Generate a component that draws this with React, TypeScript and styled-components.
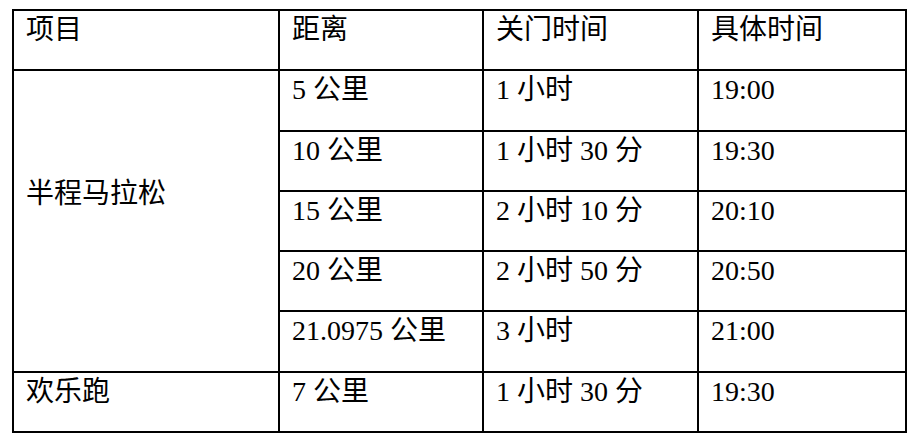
import React from "react";
import styled, { createGlobalStyle } from "styled-components";

const Global = createGlobalStyle`
  html, body { margin: 0; padding: 0; background: #ffffff; }
  body { font-family: "Liberation Serif", "Noto Sans CJK SC", serif; color: #000; }
`;

const Page = styled.div`
  padding: 9px 0 0 12px;
`;

const Table = styled.table`
  border-collapse: separate;
  border-spacing: 0;
  table-layout: fixed;
  width: 895px;
  border-top: 2px solid #000;
  border-left: 2px solid #000;
  font-family: "Liberation Serif", "Noto Sans CJK SC", serif;
  font-size: 28px;
  line-height: 32px;
`;

const Row = styled.tr<{ $h: number }>`
  height: ${(p) => p.$h}px;
`;

const Cell = styled.td<{ $span?: boolean }>`
  box-sizing: border-box;
  border-right: 2px solid #000;
  border-bottom: 2px solid #000;
  padding: ${(p) => (p.$span ? "0 0 54px 12px" : "3px 0 0 12px")};
  vertical-align: ${(p) => (p.$span ? "middle" : "top")};
  white-space: nowrap;
  font-weight: 400;
`;

const cols = [266, 204, 215, 208];

type R = { h: number; cells: { text: string; span?: number }[] };

const rows: R[] = [
  { h: 60, cells: [{ text: "项目" }, { text: "距离" }, { text: "关门时间" }, { text: "具体时间" }] },
  { h: 61, cells: [{ text: "半程马拉松", span: 5 }, { text: "5 公里" }, { text: "1 小时" }, { text: "19:00" }] },
  { h: 60, cells: [{ text: "10 公里" }, { text: "1 小时 30 分" }, { text: "19:30" }] },
  { h: 60, cells: [{ text: "15 公里" }, { text: "2 小时 10 分" }, { text: "20:10" }] },
  { h: 60, cells: [{ text: "20 公里" }, { text: "2 小时 50 分" }, { text: "20:50" }] },
  { h: 61, cells: [{ text: "21.0975 公里" }, { text: "3 小时" }, { text: "21:00" }] },
  { h: 60, cells: [{ text: "欢乐跑" }, { text: "7 公里" }, { text: "1 小时 30 分" }, { text: "19:30" }] },
];

export default function App() {
  return (
    <>
      <Global />
      <Page>
        <Table>
          <colgroup>
            {cols.map((w, i) => (
              <col key={i} style={{ width: w }} />
            ))}
          </colgroup>
          <tbody>
            {rows.map((r, i) => (
              <Row key={i} $h={r.h}>
                {r.cells.map((c, j) => (
                  <Cell key={j} rowSpan={c.span} $span={!!c.span}>
                    {c.text}
                  </Cell>
                ))}
              </Row>
            ))}
          </tbody>
        </Table>
      </Page>
    </>
  );
}
